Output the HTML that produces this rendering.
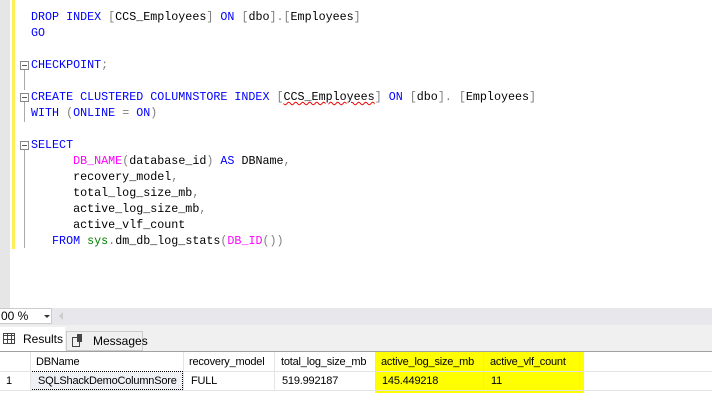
<!DOCTYPE html>
<html><head><style>
body{margin:0;width:712px;height:418px;position:relative;overflow:hidden;background:#fff;font-family:"Liberation Sans",sans-serif}
.a{position:absolute}
.code{position:absolute;left:31px;top:9px;font-family:"Liberation Mono",monospace;font-size:11.7px;line-height:16px;white-space:pre;color:#000}
.k{color:#0000ff}.g{color:#808080}.f{color:#ff00ff}.br{color:#800000}.gr{color:#008000}
.sq{position:absolute;left:20px;width:7px;height:7px;border:1px solid #888;background:#fff}
.sq:after{content:"";position:absolute;left:1px;top:3px;width:5px;height:1px;background:#555}
.vl{position:absolute;left:24px;width:1px;background:#aaa}
.t{position:absolute;font-size:11px;letter-spacing:-0.2px;color:#000;top:1px;line-height:18px;white-space:nowrap}
</style></head><body>
<div class="a" style="left:0;top:0;width:10px;height:308px;background:#e6e6e6"></div>
<div class="a" style="left:12px;top:0;width:3px;height:249px;background:#ffee55"></div>
<div class="sq" style="top:61px"></div>
<div class="vl" style="top:70px;height:20px"></div>
<div class="sq" style="top:93px"></div>
<div class="vl" style="top:102px;height:20px"></div>
<div class="sq" style="top:141px"></div>
<div class="vl" style="top:150px;height:98px"></div>
<div class="code"><span class="k">DROP INDEX </span><span class="g">[</span>CCS_Employees<span class="g">]</span><span class="k"> ON </span><span class="g">[</span>dbo<span class="g">].[</span>Employees<span class="g">]</span>
<span class="k">GO</span>

<span class="k">CHECKPOINT</span><span class="g">;</span>

<span class="k">CREATE CLUSTERED COLUMNSTORE INDEX </span><span class="g">[</span><span style="text-decoration:underline wavy #e00;text-decoration-thickness:1px">CCS_Employees</span><span class="g">]</span><span class="k"> ON </span><span class="g">[</span>dbo<span class="g">].</span> <span class="g">[</span>Employees<span class="g">]</span>
<span class="k">WITH </span><span class="g">(</span><span class="k">ONLINE </span><span class="g">=</span><span class="k"> ON</span><span class="g">)</span>

<span class="k">SELECT</span>
      <span class="f">DB_NAME</span><span class="g">(</span>database_id<span class="g">)</span><span class="k"> AS </span>DBName<span class="g">,</span>
      recovery_model<span class="g">,</span>
      total_log_size_mb<span class="g">,</span>
      active_log_size_mb<span class="g">,</span>
      active_vlf_count
   <span class="k">FROM </span><span class="gr">sys</span><span class="g">.</span>dm_db_log_stats<span class="g">(</span><span class="f">DB_ID</span><span class="g">())</span></div>
<div class="a" style="left:0;top:308px;width:712px;height:17px;background:#e8e8ec"></div>
<div class="a" style="left:0;top:308px;width:52px;height:16px;background:#fff;border:1px solid #ccc;border-left:0;box-sizing:border-box;font-size:12px;line-height:15px;padding-left:1px">00 %<span style="position:absolute;left:44px;top:6px;border:3px solid transparent;border-top:3px solid #333"></span></div>
<div class="a" style="left:59px;top:312px;border:4px solid transparent;border-right:4px solid #ccc;border-left:0"></div>
<div class="a" style="left:0;top:325px;width:712px;height:26px;background:#f0f0f0"></div>
<div class="a" style="left:0;top:327px;width:65px;height:24px;background:#fff;font-size:12px;line-height:24px"><span style="position:absolute;left:3px;top:6px;width:12px;height:11px;border:1px solid #444;box-sizing:border-box;background:repeating-linear-gradient(90deg,transparent 0 3px,#444 3px 4px),repeating-linear-gradient(0deg,transparent 0 3px,#444 3px 4px)"></span><span style="position:absolute;left:23px">Results</span></div>
<div class="a" style="left:66px;top:331px;width:77px;height:20px;border:1px solid #ccc;box-sizing:border-box;font-size:12px;line-height:19px"><span style="position:absolute;left:5px;top:5px;width:8px;height:10px;border:1px solid #444;box-sizing:border-box"></span><span style="position:absolute;left:10px;top:2px;width:5px;height:8px;background:#444"></span><span style="position:absolute;left:26px">Messages</span></div>
<div class="a" style="left:0;top:351px;width:712px;height:1px;background:#a0a0a0"></div>
<div class="a" style="left:375px;top:352px;width:209px;height:41px;background:#ffff00"></div>
<div class="a" style="left:0;top:352px;width:712px;height:19px;border-bottom:1px solid #e4e4e4">
<div class="t" style="left:36px">DBName</div>
<div class="t" style="left:189px">recovery_model</div>
<div class="t" style="left:281px">total_log_size_mb</div>
<div class="t" style="left:381px">active_log_size_mb</div>
<div class="t" style="left:490px">active_vlf_count</div>
</div>
<div class="a" style="left:0;top:371px;width:712px;height:19px;border-bottom:1px solid #e4e4e4">
<div class="t" style="left:6px">1</div>
<div class="a" style="left:30px;top:0;width:153px;height:19px;background:#eef0f4;border:1px dotted #000;box-sizing:border-box"></div>
<div class="t" style="left:38px">SQLShackDemoColumnSore</div>
<div class="t" style="left:191px">FULL</div>
<div class="t" style="left:282px">519.992187</div>
<div class="t" style="left:382px">145.449218</div>
<div class="t" style="left:491px">11</div>
</div>
<div class="a" style="left:30px;top:352px;width:1px;height:38px;background:#e4e4e4"></div>
<div class="a" style="left:183px;top:352px;width:1px;height:38px;background:#e4e4e4"></div>
<div class="a" style="left:274px;top:352px;width:1px;height:38px;background:#e4e4e4"></div>
<div class="a" style="left:375px;top:352px;width:1px;height:38px;background:#e4e4a0"></div>
<div class="a" style="left:483px;top:352px;width:1px;height:38px;background:#e4e4a0"></div>
<div class="a" style="left:579px;top:352px;width:1px;height:38px;background:#e4e4a0"></div>
</body></html>
